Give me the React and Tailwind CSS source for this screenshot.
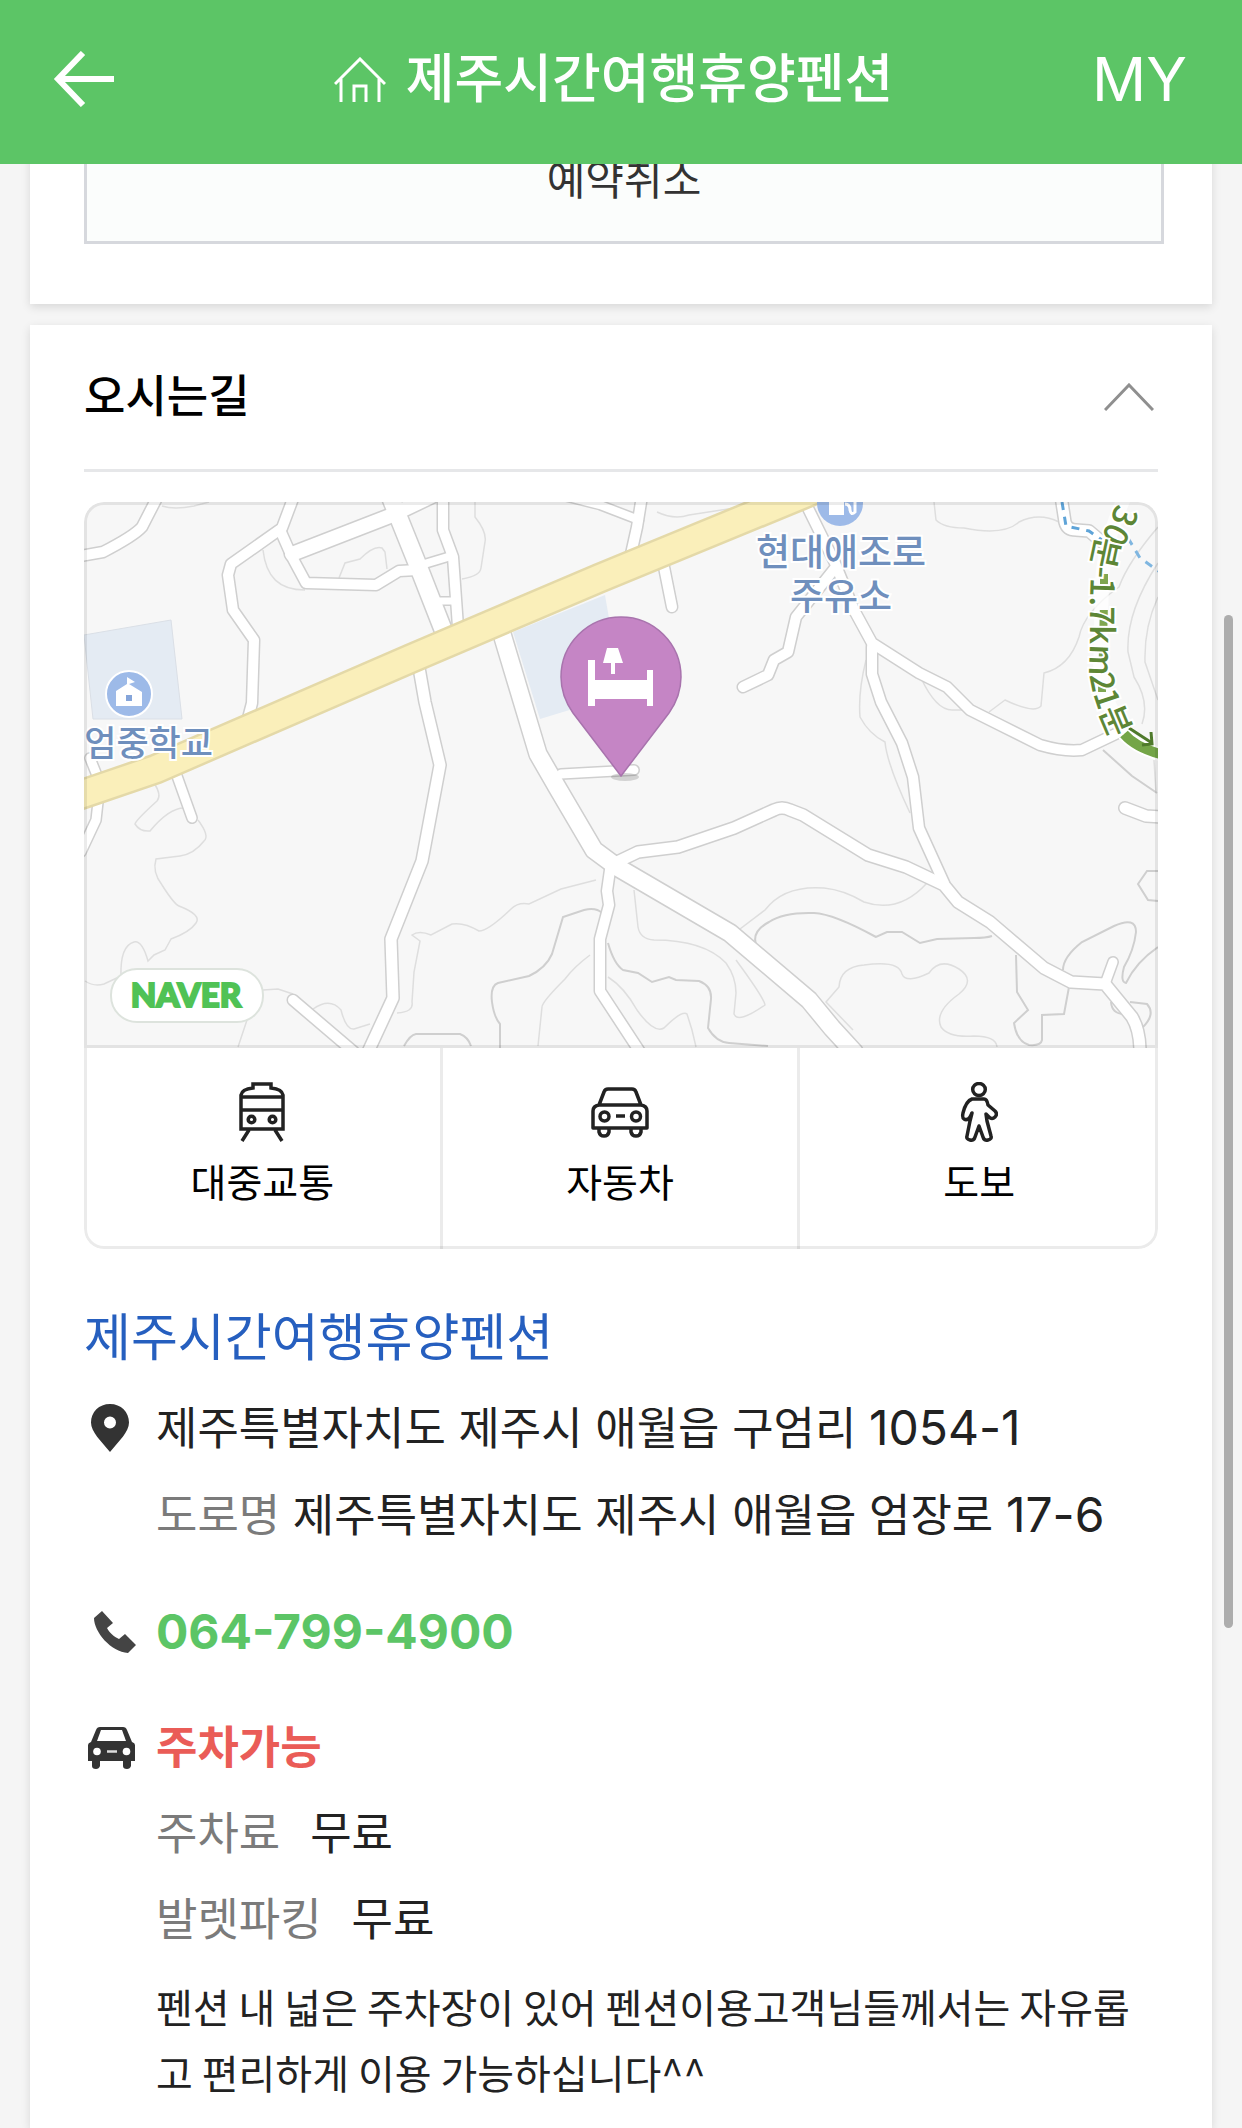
// src/pages/PensionLocation.jsx
import { useState } from "react";

/* ---------- Map data ---------- */

// Local roads, drawn twice: grey casing first, white surface on top
const ROADS = [
  { d: "M76 -10 L58 25 Q50 34 19 50 L-4 54", w: 11 },
  { d: "M210 -6 L198 26 L147 62 L144 73 L149 108 L170 138 L168 201 L162 224", w: 11 },
  { d: "M197 30 L208 55 L222 81 L292 83 L315 69 L333 68", w: 11 },
  { d: "M208 52 L306 14 L352 -8", w: 15 },
  { d: "M306 -6 L333 61 L360 130", w: 18 },
  { d: "M359 -6 L359 28 L369 55 L374 125", w: 11 },
  { d: "M337 63 L367 54", w: 9 },
  { d: "M354 99 L370 99", w: 8 },
  { d: "M334 160 L341 200 L356 263 L338 359 L307 437 L309 496 L284 550", w: 12 },
  { d: "M415 122 L454 252 L473 285 L510 348 L533 365 L646 431 L725 498 L748 526 L770 550", w: 18 },
  { d: "M477 272 L550 268", w: 10 },
  { d: "M531 361 L554 350 L594 345 L650 326 L690 308 Q698 304 706 308 L719 313 L784 353 L822 365 L860 383 L874 400 L906 420 L960 466 L987 480 L1021 482 L1048 515 Q1056 528 1056 550", w: 12 },
  { d: "M1021 482 L1029 460", w: 10 },
  { d: "M718 -6 L751 61 L770 108 L788 141 L835 171 L863 185 L886 208 L914 222 L956 243 Q980 250 998 248 L1040 228", w: 11 },
  { d: "M751 66 L712 115 L704 150 L690 158 L684 173 L659 185", w: 11 },
  { d: "M788 145 L788 172 L797 200 L818 241 L829 275 L835 326 L860 381", w: 11 },
  { d: "M526 368 L523 389 L525 403 L516 437 L516 489 L556 550", w: 11 },
  { d: "M209 498 L270 550", w: 11 },
  { d: "M14 300 L12 318 L-3 350", w: 10 },
  { d: "M6 256 L14 276", w: 10 },
  { d: "M93 274 L108 316", w: 10 },
  { d: "M558 -6 L553 25 L547 52", w: 11 },
  { d: "M480 -6 L516 3 L555 18", w: 9 },
  { d: "M579 60 L588 105", w: 11 },
  { d: "M1041 306 L1062 314 L1080 315", w: 12 },
  { d: "M977 -6 L981 20 Q983 28 992 28 L1005 29 L1018 40", w: 12 },
];

const CONTOURS = [
  "M179 48 C182 75 195 88 221 88",
  "M255 76 L261 61 L276 57 Q290 43 298 46 L301 50 L303 67",
  "M391 0 L391 15 Q403 30 401 40 L397 66 Q396 74 378 77",
  "M78 4 Q90 8 110 4 L125 0",
  "M70 281 Q78 293 73 299 Q52 318 51 322 Q56 330 66 329 Q85 306 100 306",
  "M114 318 Q126 334 120 339 Q110 352 96 354 L72 357 Q68 370 78 383 Q90 402 95 404 Q118 413 112 421 Q106 430 87 437 L81 448 L70 453 L64 459 Q58 438 50 440 Q36 444 37 474 L20 482 Q10 485 1 479",
  "M179 488 L194 487 L209 492 M229 507 Q246 495 257 508 Q262 528 270 527 L286 522",
  "M163 518 L154 545",
  "M512 378 L477 387 L445 402 Q434 400 427 407 Q404 429 395 429 Q380 420 368 422 L347 433 Q335 428 328 433 L336 439 L330 470 L328 500 Q330 510 313 511",
  "M506 453 Q490 465 481 477 Q458 500 458 505 L454 544",
  "M524 475 Q540 485 553 508 Q570 532 580 526 Q598 508 603 512 L608 528 L612 545",
  "M550 388 L554 425 Q556 437 570 438 Q620 438 642 461 Q652 475 652 491 L650 512 Q654 522 681 503 Q680 496 652 458",
  "M652 430 L681 408 Q700 383 740 386 Q760 388 780 400 Q815 412 843 381",
  "M769 528 L742 500 L755 485 Q756 465 780 463 Q815 458 818 472 Q822 482 845 471 Q856 455 875 467 Q892 478 875 492 Q850 510 857 525 Q865 536 890 534 Q912 534 913 545",
  "M782 158 Q774 190 776 215 Q785 232 801 240 Q803 262 826 311",
  "M850 0 L852 18 Q860 26 880 26 Q920 34 935 20 Q955 10 975 20",
  "M1074 25 Q1044 60 1035 85 Q1000 110 995 135 Q985 165 960 171 L957 204 Q950 212 921 198 L905 210",
  "M837 176 Q852 208 868 208 L885 208",
  "M1074 61 Q1042 110 1044 150 L1050 175 Q1066 200 1058 222",
  "M1074 95 Q1060 125 1061 160 L1074 198",
  "M573 10 Q590 18 605 13 L670 3",
  "M1070 258 L1072 291",
];

const EDGES = [
  "M518 411 Q512 405 500 408 L479 415 L468 452 Q462 466 445 474 L414 481 Q406 484 408 500 Q410 515 416 522 L416 546",
  "M320 544 Q326 533 332 532 L376 532 Q384 535 387 544",
  "M524 441 Q530 462 539 468 L554 471 L568 480 L585 475 L592 478 L615 479 Q628 484 627 497 L624 526 Q632 540 645 541 L684 544",
  "M684 458 L673 445 Q666 430 685 420 Q700 410 730 411 Q750 412 792 435 L803 430 L818 430 L836 441 L853 437 L890 436 Q902 436 908 434",
  "M932 453 L933 490 L944 508 L930 521 Q933 540 945 543 Q957 544 958 538 L958 513 L980 512 L985 485",
  "M979 468 Q979 455 998 440 L1030 424 Q1052 414 1052 430 Q1050 448 1040 465 Q1036 480 1042 481 Q1052 460 1074 445",
  "M1074 369 L1063 369 L1054 382 L1064 398 L1074 399",
  "M1027 500 Q1028 512 1040 512 M1046 500 L1063 502 Q1072 512 1059 525",
  "M1019 248 L1048 274 L1073 291",
];

const FARE_ROWS = [
  { label: "주차료", value: "무료" },
  { label: "발렛파킹", value: "무료" },
];

/* ---------- Icons ---------- */

function ArrowIcon() {
  return (
    <svg className="w-[62px] h-[56px]" viewBox="0 0 62 56" fill="none" stroke="#fff" strokeWidth="6" aria-hidden="true">
      <path d="M61 28H5M30 2L5 28l25 26" />
    </svg>
  );
}

function HomeIcon() {
  return (
    <svg className="w-[52px] h-[45px]" viewBox="0 0 52 45" fill="none" stroke="#fff" strokeWidth="3" aria-hidden="true">
      <path d="M1 27L26 2l25 25M7 22v23M45 22v23M20 45V29h12v16" />
    </svg>
  );
}

function TrainIcon() {
  return (
    <svg className="w-[46px] h-[60px]" viewBox="0 0 46 60" fill="none" stroke="#222" strokeWidth="3.5" aria-hidden="true">
      <path d="M2 47V13Q3 7 14 6V2h18v4q11 1 12 7v34zM2 15h42M2 28h42M10 48L3 59M36 48l7 11" />
      <circle cx="12.5" cy="37.5" r="3.3" />
      <circle cx="33.5" cy="37.5" r="3.3" />
    </svg>
  );
}

function CarIcon() {
  return (
    <svg className="w-[58px] h-[60px]" viewBox="0 -5 58 60" fill="none" stroke="#222" strokeWidth="3.5" strokeLinejoin="round" aria-hidden="true">
      <path d="M8 18L13 5q1-3 4-3h24q3 0 4 3l5 13M8 18h42q6 1 6 6v17H2V24q0-5 6-6z" />
      <path d="M8 41v4q1 4 5 4t5-4v-4M40 41v4q1 4 5 4t5-4v-4M25 29h9" />
      <circle cx="13.5" cy="29.5" r="4.5" />
      <circle cx="45" cy="29.5" r="4.5" />
    </svg>
  );
}

function WalkIcon() {
  return (
    <svg className="w-[38px] h-[60px]" viewBox="0 0 38 60" fill="none" stroke="#222" strokeWidth="3.5" strokeLinejoin="round" aria-hidden="true">
      <ellipse cx="19" cy="7.5" rx="6.3" ry="6" />
      <path d="M12 17h12q3 0 4 6l7 6q3 3 0 6-3 3-6 0l-3-3 1 7 4 15q1 3-3 4-4 1-5-3l-4-11-4 11q-1 4-5 3-4-1-3-4l3-15 2-8-2 4q-3 4-6 2-2-1-1-6Q6 19 12 17z" />
    </svg>
  );
}

function PinIcon() {
  return (
    <svg className="w-[38px] h-[48px]" viewBox="0 0 38 48" fill="#333" aria-hidden="true">
      <path
        fillRule="evenodd"
        d="M19 0C8 0 0 8 0 18.5 0 28 10 37 19 48c9-11 19-20 19-29.500C38 8 30 0 19 0zm0 12.500a6 6 0 110 12 6 6 0 010-12z"
      />
    </svg>
  );
}

function PhoneIcon() {
  return (
    <svg className="w-[42px] h-[42px] ml-1.5" viewBox="0 0 42 42" fill="#444" aria-hidden="true">
      <path d="M8 0L0 7c0 14 17 34 34 35l8-8-11-11-6 5c-5-2-10-7-12-11l6-5z" />
    </svg>
  );
}

function ParkingCarIcon() {
  return (
    <svg className="w-[47px] h-[42px]" viewBox="0 0 47 42" aria-hidden="true">
      <path d="M0 34V18q0-2 3-3L8 3q1-3 4-3h23q3 0 4 3l5 12q3 1 3 3v16h-4v5q-1 3-4 3-4 0-4-3v-5H12v5q-1 3-4 3-4 0-4-3v-5z" fill="#333" />
      <path d="M9 14L13 3h21l4 11z" fill="#fff" />
      <circle cx="9" cy="24.5" r="3.8" fill="#fff" />
      <circle cx="38.5" cy="24.5" r="3.8" fill="#fff" />
      <path d="M19 24.5h10" stroke="#ddd" strokeWidth="2.5" />
    </svg>
  );
}

const TRANSPORTS = [
  { label: "대중교통", Icon: TrainIcon },
  { label: "자동차", Icon: CarIcon },
  { label: "도보", Icon: WalkIcon },
];

/* ---------- Map ---------- */

function LocationMap() {
  return (
    <svg
      className="block w-full h-[546px] bg-[#f7f7f7] font-['Noto_Sans_CJK_KR',sans-serif]"
      viewBox="0 0 1074 546"
      preserveAspectRatio="xMidYMid slice"
      fill="none"
      role="img"
      aria-label="제주시간여행휴양펜션 지도"
    >
      {/* Facility blocks */}
      <path d="M0 133L87 118L98 217H9z" fill="#e4ebf3" stroke="#dadfe6" />
      <path d="M429 130L521 93L538 192L456 217z" fill="#e4ebf3" />

      {/* Terrain */}
      <g stroke="#dedede" strokeWidth="1.5">
        {CONTOURS.map((d) => (
          <path key={d} d={d} />
        ))}
      </g>
      <g stroke="#cfcfcf" strokeWidth="2">
        {EDGES.map((d) => (
          <path key={d} d={d} />
        ))}
      </g>

      {/* Local roads */}
      <g stroke="#cfcfcf" strokeLinecap="round" strokeLinejoin="round">
        {ROADS.map((road) => (
          <path key={road.d} d={road.d} strokeWidth={road.w + 2} />
        ))}
      </g>
      <g stroke="#fff" strokeLinecap="round" strokeLinejoin="round">
        {ROADS.map((road) => (
          <path key={road.d} d={road.d} strokeWidth={road.w - 1} />
        ))}
      </g>

      {/* Main road */}
      <path d="M-10 295L72 267L326 157L516 76L730 -12" stroke="#e4d9a8" strokeWidth="31" />
      <path d="M-10 295L72 267L326 157L516 76L730 -12" stroke="#faefba" strokeWidth="26" />

      {/* Trail */}
      <path d="M978 0L982 24L1005 29L1018 38" stroke="#5fa4d8" strokeWidth="3" strokeDasharray="8 7" />
      <path d="M1044 36L1056 56L1076 70" stroke="#7fb6e0" strokeWidth="3" strokeDasharray="8 7" />
      <path d="M1042 -8Q1020 40 1018 80L1016 170Q1020 200 1040 230" stroke="#fff" strokeWidth="14" opacity="0.7" />
      <path d="M1020 72L1020 100L1018 190" stroke="#7fa650" strokeWidth="8" strokeDasharray="16 20" />
      <path d="M1040 232Q1052 246 1080 253" stroke="#fff" strokeWidth="14" />
      <path d="M1040 232Q1052 246 1080 253" stroke="#74a548" strokeWidth="10" />
      <path d="M1045 226L1068 241M1067 230l1 12-10 1" stroke="#4f7a2c" strokeWidth="3" />
      <path id="trail" d="M1032 1C1028 18 1018 32 1010 48C1004 75 1007 130 1005 165C1006 188 1013 210 1040 265" />
      <text fontSize="33" fontWeight="500" fill="#5d8636" stroke="#fff" strokeWidth="4" paintOrder="stroke">
        <textPath href="#trail">30분-1.7km21분</textPath>
      </text>

      {/* School */}
      <circle cx="45" cy="192" r="23" fill="#9dbae8" stroke="#fff" strokeWidth="2" />
      <path d="M32 204V189L43 182V175l8 5-6 2 13 8v14z" fill="#fff" />
      <path d="M42 193h6v6h-6z" fill="#85a5da" />

      {/* Gas station */}
      <circle cx="756" cy="1" r="23" fill="#9dbae8" />
      <path d="M745 13V-8h15v21z" fill="#fff" />
      <path d="M761 2q5 0 5 6 1 6 5 2V-6" stroke="#fff" strokeWidth="3" />

      <g fill="#6f8fbd" stroke="#fff" strokeWidth="4" paintOrder="stroke" fontWeight="500">
        <text x="129" y="254" fontSize="35" textAnchor="end">엄중학교</text>
        <text fontSize="37" textAnchor="middle">
          <tspan x="757" y="64">현대애조로</tspan>
          <tspan x="757" y="108">주유소</tspan>
        </text>
      </g>

      {/* Pension marker */}
      <ellipse cx="541" cy="275" rx="14" ry="4" fill="#000" opacity="0.15" />
      <path
        d="M537 274L489 211Q477 194 477 175A60 60 0 01597 175Q597 194 585 211z"
        fill="#c585c5"
        stroke="#a873ad"
        strokeWidth="1.5"
      />
      <path d="M504 158h7v20h52v-10h6v36h-6v-7h-52v7h-7zM523 146h11l5 15h-8v11h-4v-11h-8z" fill="#fff" />

      {/* Map provider */}
      <rect x="27" y="467" width="152" height="53" rx="26" fill="#fff" stroke="#dde3dd" strokeWidth="2" />
      <text
        className="font-['Lato',sans-serif]"
        x="102"
        y="505"
        fontSize="33"
        fontWeight="900"
        fill="#50c255"
        stroke="#50c255"
        strokeWidth="2"
        textAnchor="middle"
      >
        NAVER
      </text>
    </svg>
  );
}

/* ---------- Page ---------- */

export default function App() {
  const [open, setOpen] = useState(true);

  return (
    <div className="min-h-screen flex flex-col gap-[21px] px-[30px] bg-[#f5f5f5] text-[45px] leading-[66px] text-[#222] font-['Inter','Noto_Sans_CJK_KR',sans-serif]">
      {/* Header */}
      <header className="fixed inset-x-0 top-0 z-10 h-[164px] pl-[53px] pr-[60px] pb-1.5 flex items-center justify-between bg-[#5cc566] text-white">
        <button type="button" aria-label="뒤로" className="w-[82px]">
          <ArrowIcon />
        </button>
        <a href="#home" className="flex items-center gap-5 text-[53px] font-medium">
          <HomeIcon />
          제주시간여행휴양펜션
        </a>
        <a href="#my" className="w-[90px] text-right text-[60px]">
          MY
        </a>
      </header>

      {/* Reservation card, scrolled under the header */}
      <section className="pt-[116px] pb-[60px] pl-[54px] pr-[48px] bg-white shadow-[0_3px_9px_rgba(0,0,0,0.12)]">
        <button type="button" className="w-full h-32 border-3 border-[#d6d8dd] bg-[#fbfdfc] text-[42px] text-[#333]">
          예약취소
        </button>
      </section>

      {/* Directions card */}
      <section className="flex-1 px-[54px] bg-white shadow-[0_3px_9px_rgba(0,0,0,0.12)]">
        <h2 className="border-b-3 border-[#e6e7e9] text-black">
          <button
            type="button"
            aria-expanded={open}
            onClick={() => setOpen(!open)}
            className="w-full h-36 pr-1 flex items-center justify-between font-medium"
          >
            오시는길
            <svg className={open ? "w-[50px] h-7" : "w-[50px] h-7 rotate-180"} viewBox="0 0 50 28" fill="none" stroke="#8f8f8f" strokeWidth="3" aria-hidden="true">
              <path d="M1 27L25 2l24 25" />
            </svg>
          </button>
        </h2>

        {open && (
          <>
            <div className="relative mt-[30px] rounded-[20px] overflow-hidden">
              <LocationMap />
              <div className="grid grid-cols-3 pl-px divide-x-3 divide-black/8">
                {TRANSPORTS.map(({ label, Icon }) => (
                  <button key={label} type="button" className="h-[201px] flex flex-col items-center justify-center gap-2 text-[39px] text-black">
                    <Icon />
                    {label}
                  </button>
                ))}
              </div>
              {/* Frame over the map and the buttons */}
              <div className="absolute inset-0 pointer-events-none rounded-[20px] border-3 border-black/8">
                <div className="h-[543px] border-b-3 border-black/8" />
              </div>
            </div>

            <h3 className="mt-14 text-[51px] text-[#265fbf]">제주시간여행휴양펜션</h3>

            <div className="mt-6 grid grid-cols-[72px_1fr] gap-y-[50px]">
              <div className="h-[66px] pl-[7px] flex items-center">
                <PinIcon />
              </div>
              <address className="not-italic flex flex-col gap-5">
                <p>
                  제주특별자치도 제주시 애월읍 구엄리 <span className="text-[48px]">1054-1</span>
                </p>
                <p>
                  <span className="text-[#7b7b7b]">도로명</span> 제주특별자치도 제주시 애월읍 엄장로 <span className="text-[48px]">17-6</span>
                </p>
              </address>

              <div className="h-[66px] pl-1 flex items-center">
                <PhoneIcon />
              </div>
              <a href="tel:064-799-4900" className="justify-self-start text-[48px] font-bold text-[#5cc566]">
                064-799-4900
              </a>

              <div className="h-[66px] pl-1 flex items-center">
                <ParkingCarIcon />
              </div>
              <div className="flex flex-col gap-5">
                <p className="font-bold text-[#ea5c57]">주차가능</p>
                {FARE_ROWS.map((row) => (
                  <dl key={row.label} className="flex gap-[30px]">
                    <dt className="text-[#7b7b7b]">{row.label}</dt>
                    <dd>{row.value}</dd>
                  </dl>
                ))}
                <p className="text-[40px] break-all font-['Noto_Sans_CJK_KR',sans-serif]">
                  펜션 내 넓은 주차장이 있어 펜션이용고객님들께서는 자유롭고 편리하게 이용 가능하십니다^^
                </p>
              </div>
            </div>
          </>
        )}
      </section>

      {/* Scroll indicator */}
      <div className="fixed right-[9px] top-[615px] z-20 w-[9px] h-[1013px] rounded-full bg-[#adadad]" />
    </div>
  );
}
